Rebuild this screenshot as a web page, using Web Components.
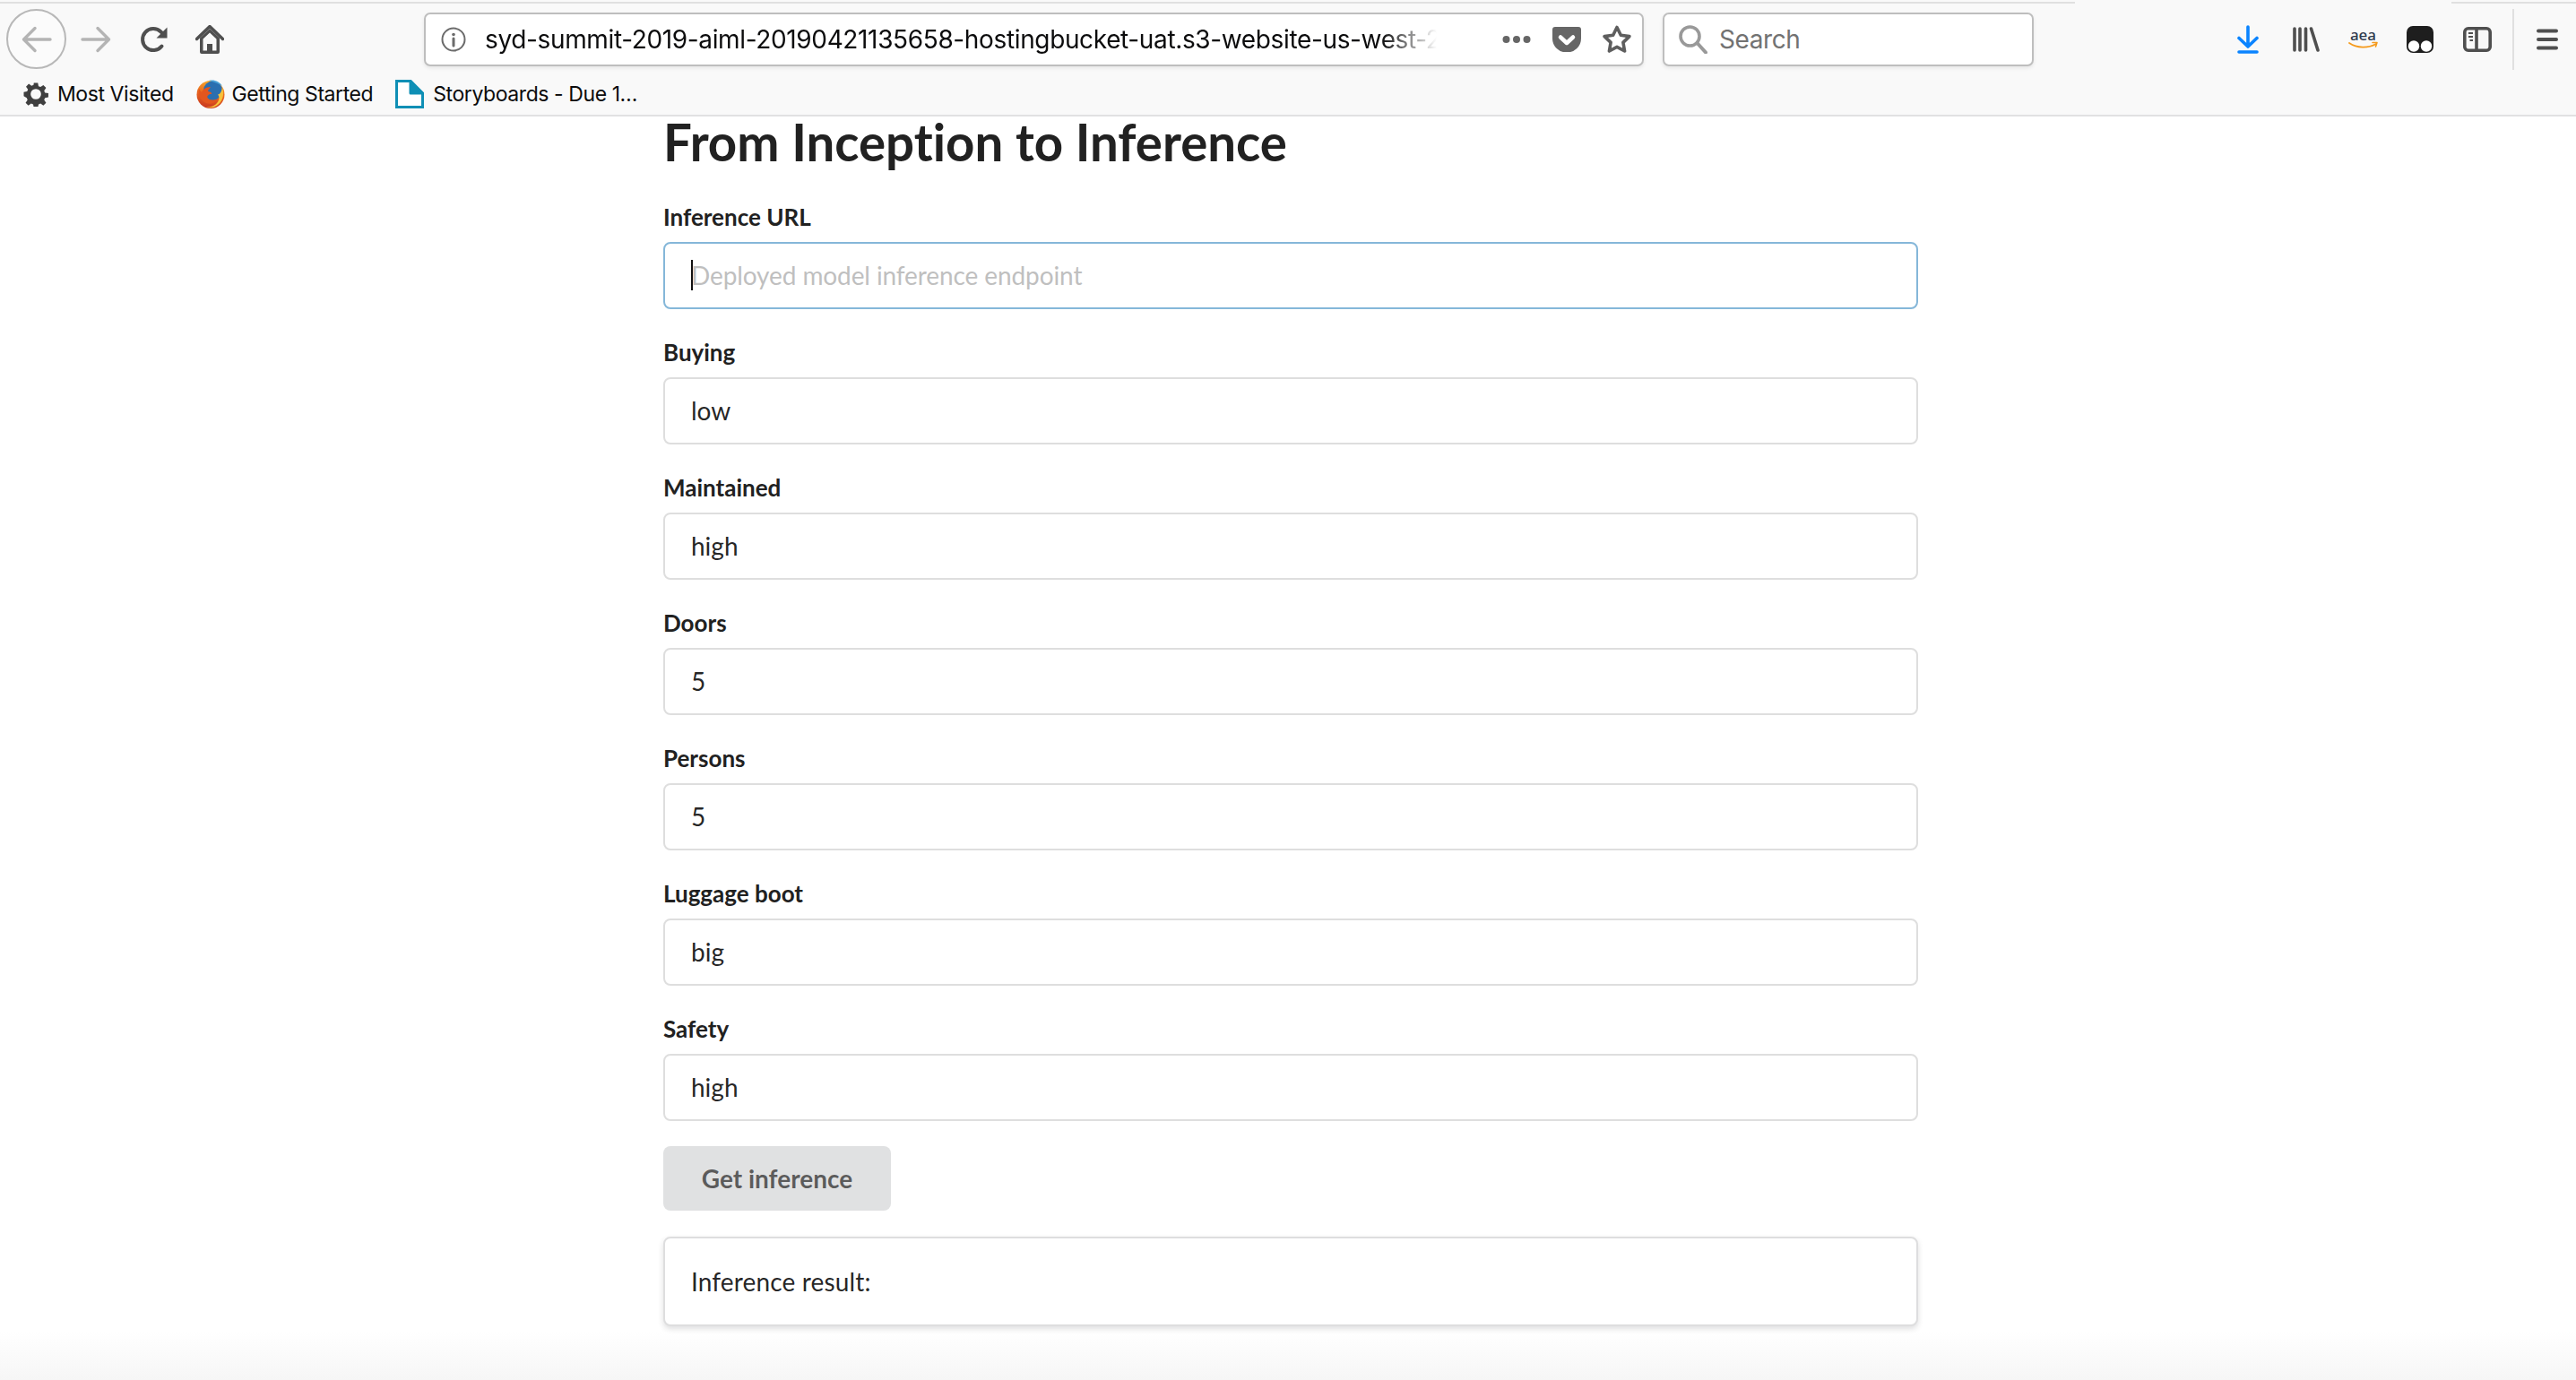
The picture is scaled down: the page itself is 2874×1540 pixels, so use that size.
<!DOCTYPE html>
<html lang="en">
<head>
<meta charset="utf-8">
<title>From Inception to Inference</title>
<style>
  html, body { margin: 0; height: 100%; overflow: hidden; }
  body { display: flex; flex-direction: column; background: #fff; }
</style>
</head>
<body>
<browser-chrome></browser-chrome>
<inference-page>
  <form-field label="Inference URL" placeholder="Deployed model inference endpoint" focused></form-field>
  <form-field label="Buying" value="low"></form-field>
  <form-field label="Maintained" value="high"></form-field>
  <form-field label="Doors" value="5"></form-field>
  <form-field label="Persons" value="5"></form-field>
  <form-field label="Luggage boot" value="big"></form-field>
  <form-field label="Safety" value="high"></form-field>
</inference-page>

<script>
// Browser toolbar icons
const icons = {
  back: `<svg width="34" height="30" viewBox="0 0 34 30" fill="none" stroke="#b4b4b4" stroke-width="3.4" stroke-linecap="round" stroke-linejoin="round"><path d="M32 15H3M15 2.500 2.500 15 15 27.500"/></svg>`,
  forward: `<svg width="34" height="30" viewBox="0 0 34 30" fill="none" stroke="#b4b4b4" stroke-width="3.4" stroke-linecap="round" stroke-linejoin="round"><path d="M2 15h29M19 2.500 31.500 15 19 27.500"/></svg>`,
  reload: `<svg width="32" height="30" viewBox="0 0 32 30" fill="none"><path d="M24.500 22.500A12 12 0 1 1 23.500 6.500L28 11" stroke="#4f4f4f" stroke-width="4" stroke-linecap="round"/><path d="M30.500 1.500V13.500H18.500Z" fill="#4f4f4f"/></svg>`,
  home: `<svg width="32" height="32" viewBox="0 0 32 32" fill="none"><path d="M1.500 15.500 16 1.500 30.500 15.500" stroke="#4f4f4f" stroke-width="3.400" stroke-linecap="round" stroke-linejoin="round"/><path fill-rule="evenodd" fill="#4f4f4f" d="M5 14.500 16 4l11 10.500V30a2 2 0 0 1-2 2H7a2 2 0 0 1-2-2ZM8.500 15.500V28.500H13V21h6v7.500h4.500V15.500L16 8.500Z"/><path fill="#4f4f4f" d="M15 23h2v3h-2z"/></svg>`,
  gear: `<svg width="28" height="28" viewBox="0 0 28 28"><path fill="#3f3f3f" fill-rule="evenodd" d="M11.500 0h5l.8 4.200 2.500 1 3.500-2.400 3.400 3.400-2.400 3.500 1 2.500 4.200.8v5l-4.200.8-1 2.500 2.400 3.500-3.400 3.400-3.500-2.400-2.500 1-.8 4.200h-5l-.8-4.200-2.500-1-3.500 2.400-3.400-3.400 2.400-3.500-1-2.500L-1 16.500v-5l4.200-.8 1-2.500-2.400-3.500 3.400-3.400 3.500 2.400 2.500-1ZM14 7.500a6.500 6.500 0 1 0 0 13 6.500 6.500 0 0 0 0-13Z" transform="translate(1.400 1.400) scale(.9)"/></svg>`,
  firefox: `<svg width="32" height="32" viewBox="0 0 32 32"><defs><linearGradient id="fx" x1="0.600" y1="0" x2="0.400" y2="1"><stop offset="0" stop-color="#f7b02c"/><stop offset=".5" stop-color="#e8641f"/><stop offset="1" stop-color="#c8381f"/></linearGradient></defs><circle cx="16" cy="16.500" r="15.500" fill="url(#fx)"/><circle cx="18.500" cy="12" r="10.500" fill="#2a6fb0"/><path d="M14 1c6-1.500 12 1 15 6-3-2-7-4-15-6Z" fill="#49a2d8"/><path d="M29 9c3 8 0 17-8 21-3 1.500-7 1.500-10 .5 6 .5 12-2 14-8 1-3 0-5-1-6 3 0 4-4 5-7.500Z" fill="#f8c23a"/><path d="M3 10c-1 6 1 13 8 16 5 2 10 0 12-4-3 2-8 2-10-1-2-3 1-5 4-5 1-2-3-3-4-3 0-2 2-3 3-5-5 0-9 3-10 6-1-1-2-2-3-4Z" fill="#e2561e"/></svg>`,
  page: `<svg width="32" height="32" viewBox="0 0 32 32"><path d="M1.500 1.500H17L30.500 15V30.500H1.500Z" fill="#fff" stroke="#0f8fb5" stroke-width="3"/><path d="M17 1.500 30.500 15H17Z" fill="#0f8fb5" stroke="#0f8fb5" stroke-width="3" stroke-linejoin="round"/></svg>`,
  info: `<svg width="28" height="28" viewBox="0 0 28 28" fill="none"><circle cx="14" cy="14" r="12.500" stroke="#6b6b6b" stroke-width="2"/><circle cx="14" cy="8.500" r="1.800" fill="#6b6b6b"/><path d="M14 13v8" stroke="#6b6b6b" stroke-width="3" stroke-linecap="round"/></svg>`,
  dots: `<svg width="32" height="10" viewBox="0 0 32 10" fill="#666"><circle cx="4.500" cy="5" r="4"/><circle cx="16" cy="5" r="4"/><circle cx="27.500" cy="5" r="4"/></svg>`,
  pocket: `<svg width="32" height="28" viewBox="0 0 32 28"><path fill="#666" d="M3 0h26a3 3 0 0 1 3 3v10a15.500 15 0 0 1-32 0V3a3 3 0 0 1 3-3Z"/><path d="M9 11.500l7 6.500 7-6.500" fill="none" stroke="#fff" stroke-width="4.500" stroke-linecap="round" stroke-linejoin="round"/></svg>`,
  star: `<svg width="32" height="32" viewBox="0 0 32 32"><path d="M16 2.500 20.300 11.200 29.900 12.600 22.900 19.400 24.600 29 16 24.400 7.400 29 9.100 19.400 2.100 12.600 11.700 11.200Z" fill="none" stroke="#5e5e5e" stroke-width="3.600" stroke-linejoin="round"/></svg>`,
  search: `<svg width="32" height="32" viewBox="0 0 32 32" fill="none" stroke="#999" stroke-width="3.600" stroke-linecap="round"><circle cx="12.500" cy="12.500" r="10.500"/><path d="M20.500 20 30 30.500" stroke-width="4"/></svg>`,
  download: `<svg width="24" height="32" viewBox="0 0 24 32" fill="none" stroke="#0a84ff" stroke-width="3.600" stroke-linecap="round" stroke-linejoin="round"><path d="M12 2v21M2 14.500 12 24 22 14.500"/><path d="M2 30h20"/></svg>`,
  library: `<svg width="30" height="28" viewBox="0 0 30 28" fill="none" stroke="#4f4f4f" stroke-width="3.600" stroke-linecap="round"><path d="M2 2v24M8 2v24M14.500 2v24M20.500 2l7.500 24"/></svg>`,
  amazon: `<svg width="34" height="22" viewBox="0 0 34 22" fill="none"><path d="M1 15c9 6 21 6 30 1" stroke="#f59a1b" stroke-width="1.800" stroke-linecap="round"/><path d="M27 14.500h5l-1.500 4.500" stroke="#f59a1b" stroke-width="1.600" stroke-linecap="round" stroke-linejoin="round"/><text x="16.500" y="11.500" text-anchor="middle" font-family="'Noto Sans', sans-serif" font-size="17" font-weight="500" fill="#2f3a4d">aea</text></svg>`,
  monkey: `<svg width="30" height="30" viewBox="0 0 30 30"><rect width="30" height="30" rx="7" fill="#1e1e1e"/><circle cx="8" cy="22.500" r="6.200" fill="#fff"/><circle cx="22" cy="22.500" r="6.200" fill="#fff"/></svg>`,
  sidebar: `<svg width="32" height="28" viewBox="0 0 32 28" fill="none" stroke="#4f4f4f" stroke-width="3.600"><rect x="1.800" y="1.800" width="28.400" height="24.400" rx="4"/><path d="M15 2v24"/><path d="M6 7h5M6 11h5M7.500 15H11" stroke-width="2"/></svg>`,
  menu: `<svg width="24" height="24" viewBox="0 0 24 24" fill="none" stroke="#4f4f4f" stroke-width="4" stroke-linecap="round"><path d="M2 2.500h20M2 12h20M2 21.500h20"/></svg>`
};

class BrowserChrome extends HTMLElement {
  constructor() {
    super();
    this.attachShadow({ mode: 'open' });
    this.shadowRoot.innerHTML = `
      <style>
        :host {
          display: block;
          flex: none;
          background: #f9f9f9;
          border-bottom: 2px solid #e1e1e2;
          font-family: "Liberation Sans", Arial, sans-serif;
          color: #0c0c0d;
        }
        .tabs { display: flex; height: 4px; align-items: flex-end; }
        .tabs i { height: 2px; background: #e0e0e0; }
        .tabs i:first-child { width: 2315px; }
        .tabs i:last-child { margin-left: 420px; flex: 1; }
        .nav { display: flex; align-items: center; height: 79px; }
        .nav > * { flex: none; display: flex; }
        .back {
          box-sizing: border-box;
          width: 67px;
          height: 67px;
          margin-left: 7px;
          border: 2px solid #b8b8b8;
          border-radius: 50%;
          background: #fbfbfb;
          align-items: center;
          justify-content: center;
        }
        .field {
          box-sizing: border-box;
          height: 60px;
          align-items: center;
          background: #fff;
          border: 2px solid #bebebe;
          border-radius: 7px;
          box-shadow: 0 2px 4px rgba(0, 0, 0, .08);
        }
        .url { width: 1361px; padding: 0 12px 0 17px; }
        .url b {
          flex: none;
          margin-left: 21px;
          white-space: nowrap;
          font: 400 28px "Inter", sans-serif;
          letter-spacing: -.36px;
          -webkit-mask-image: linear-gradient(to right, #000 1000px, transparent 1062px);
        }
        .search { width: 414px; margin-left: 21px; padding-left: 16px; }
        .search span { margin-left: 13px; font: 400 28px "Inter", sans-serif; color: #727272; letter-spacing: -.4px; }
        .sep { width: 2px; height: 68px; background: #e0e0e0; }
        .marks { display: flex; align-items: center; height: 44px; padding: 0 0 1px 26px; gap: 25px; }
      </style>
      <div class="tabs"><i></i><i></i></div>
      <div class="nav">
        <span class="back">${icons.back}</span>
        <span style="margin-left:16px">${icons.forward}</span>
        <span style="margin-left:32px">${icons.reload}</span>
        <span style="margin-left:30px">${icons.home}</span>
        <div class="field url" style="margin-left:223px">
          ${icons.info}
          <b>syd-summit-2019-aiml-20190421135658-hostingbucket-uat.s3-website-us-west-2</b>
          <span style="display:flex;margin-left:auto">${icons.dots}</span>
          <span style="display:flex;margin-left:24px">${icons.pocket}</span>
          <span style="display:flex;margin-left:24px">${icons.star}</span>
        </div>
        <div class="field search">${icons.search}<span>Search</span></div>
        <span style="margin-left:227px">${icons.download}</span>
        <span style="margin-left:38px">${icons.library}</span>
        <span style="margin-left:32px">${icons.amazon}</span>
        <span style="margin-left:31px">${icons.monkey}</span>
        <span style="margin-left:33px">${icons.sidebar}</span>
        <span class="sep" style="margin-left:23px"></span>
        <span style="margin-left:25px">${icons.menu}</span>
      </div>
      <div class="marks">
        <bookmark-item icon="gear">Most Visited</bookmark-item>
        <bookmark-item icon="firefox" style="--icon-gap:8px">Getting Started</bookmark-item>
        <bookmark-item icon="page">Storyboards - Due 1…</bookmark-item>
      </div>
    `;
  }
}

class BookmarkItem extends HTMLElement {
  constructor() {
    super();
    this.attachShadow({ mode: 'open' });
  }

  connectedCallback() {
    this.shadowRoot.innerHTML = `
      <style>
        :host {
          display: flex;
          align-items: center;
          gap: var(--icon-gap, 10px);
          font: 400 23px "Inter", sans-serif;
          letter-spacing: -.42px;
          white-space: nowrap;
        }
        svg { display: block; }
      </style>
      ${icons[this.getAttribute('icon')]}
      <slot></slot>
    `;
  }
}

class InferencePage extends HTMLElement {
  constructor() {
    super();
    this.attachShadow({ mode: 'open' });
    this.shadowRoot.innerHTML = `
      <style>
        :host {
          display: block;
          flex: 1;
          min-height: 0;
          background: linear-gradient(to bottom, #fff calc(100% - 54px), #f6f6f6);
          font-family: Lato, sans-serif;
          font-variant-ligatures: none;
          color: rgba(0, 0, 0, .87);
        }
        main { width: 1400px; margin-left: 740px; }
        h1 { margin: 0 0 40px; font-size: 56.4px; line-height: 56px; font-weight: 700; color: #212121; }
        .fields { display: flex; flex-direction: column; gap: 32px; }
      </style>
      <main>
        <h1>From Inception to Inference</h1>
        <div class="fields"><slot></slot></div>
        <get-button>Get inference</get-button>
        <result-card>Inference result:</result-card>
      </main>
    `;
  }
}

class FormField extends HTMLElement {
  constructor() {
    super();
    this.attachShadow({ mode: 'open' });
  }

  connectedCallback() {
    const value = this.getAttribute('value');
    const placeholder = this.getAttribute('placeholder');
    const text = value !== null
      ? `<span>${value}</span>`
      : `<i class="caret"></i><span class="ph">${placeholder}</span>`;
    this.shadowRoot.innerHTML = `
      <style>
        :host { display: block; }
        label { display: block; margin-bottom: 12px; font-size: 26px; line-height: 32px; font-weight: 700; color: #212121; }
        .input {
          box-sizing: border-box;
          display: flex;
          align-items: center;
          height: 75px;
          padding: 0 29px 1px;
          border: 2px solid #dedede;
          border-radius: 8px;
          background: #fff;
          font-size: 28px;
        }
        :host([focused]) .input { border-color: #85b7d9; }
        .ph { color: #bfbfbf; letter-spacing: -.1px; }
        .caret { width: 2px; height: 34px; margin-right: -2px; background: #111; }
      </style>
      <label>${this.getAttribute('label')}</label>
      <div class="input">${text}</div>
    `;
  }
}

class GetButton extends HTMLElement {
  constructor() {
    super();
    this.attachShadow({ mode: 'open' });
    this.shadowRoot.innerHTML = `
      <style>
        :host {
          display: flex;
          align-items: center;
          justify-content: center;
          box-sizing: border-box;
          width: 254px;
          height: 72px;
          margin-top: 28px;
          border-radius: 8px;
          background: #e0e1e2;
          color: rgba(0, 0, 0, .6);
          font-size: 28px;
          font-weight: 700;
        }
      </style>
      <slot></slot>
    `;
  }
}

class ResultCard extends HTMLElement {
  constructor() {
    super();
    this.attachShadow({ mode: 'open' });
    this.shadowRoot.innerHTML = `
      <style>
        :host {
          display: flex;
          align-items: center;
          box-sizing: border-box;
          height: 100px;
          margin-top: 29px;
          padding: 0 29px;
          border: 2px solid #dededf;
          border-radius: 8px;
          background: #fff;
          box-shadow: 0 3px 6px rgba(34, 36, 38, .15);
          font-size: 28px;
          letter-spacing: .15px;
        }
      </style>
      <slot></slot>
    `;
  }
}

customElements.define('bookmark-item', BookmarkItem);
customElements.define('browser-chrome', BrowserChrome);
customElements.define('form-field', FormField);
customElements.define('get-button', GetButton);
customElements.define('result-card', ResultCard);
customElements.define('inference-page', InferencePage);
</script>
</body>
</html>
